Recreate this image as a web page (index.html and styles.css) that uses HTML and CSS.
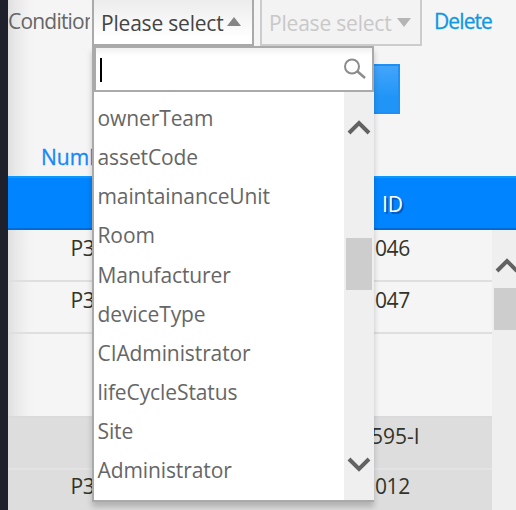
FILE: index.html
```html
<!DOCTYPE html>
<html lang="en">
<head>
<meta charset="utf-8">
<title>Asset conditions</title>
<link rel="stylesheet" href="styles.css">
</head>
<body>
<div class="app">
  <aside class="rail"></aside>
  <main class="main">
    <div class="filters">
      <span class="label">Condition</span>
      <div class="select open"><span>Please select</span><i class="tri up"></i>
        <div class="menu">
          <div class="search"><i class="caret"></i>
            <svg width="24" height="24" viewBox="0 0 24 24" fill="none" stroke="#8c8c8c"><circle cx="9" cy="8.5" r="7" stroke-width="2"/><path d="M14 13l8 7" stroke-width="2.5"/></svg>
          </div>
          <div class="list">
            <ul>
              <li>ownerTeam</li>
              <li>assetCode</li>
              <li>maintainanceUnit</li>
              <li>Room</li>
              <li>Manufacturer</li>
              <li>deviceType</li>
              <li>CIAdministrator</li>
              <li>lifeCycleStatus</li>
              <li>Site</li>
              <li>Administrator</li>
            </ul>
            <div class="scroll">
              <svg width="26" height="20" viewBox="0 0 26 20"><path d="M3 15L13 5l10 10" fill="none" stroke="#626262" stroke-width="4"/></svg>
              <div class="thumb"></div>
              <svg class="down" width="26" height="20" viewBox="0 0 26 20"><path d="M3 4l10 10L23 4" fill="none" stroke="#626262" stroke-width="4"/></svg>
            </div>
          </div>
        </div>
      </div>
      <div class="select disabled"><span>Please select</span><i class="tri dn"></i></div>
      <a class="delete">Delete</a>
    </div>
    <div class="actions"><div class="button"></div></div>
    <div class="sort"><span>Numb</span></div>
    <div class="head"><span>ID</span></div>
    <div class="body">
      <div class="rows">
        <div class="row"><span class="num">P3</span><span class="id">046</span></div>
        <div class="row"><span class="num">P3</span><span class="id">047</span></div>
        <div class="row blank"></div>
        <div class="row grey"><span class="num"></span><span class="id">595-I</span></div>
        <div class="row grey"><span class="num">P3</span><span class="id">012</span></div>
      </div>
      <div class="page-scroll">
        <svg width="24" height="20" viewBox="0 0 24 20"><path d="M5 16L15 6l10 10" fill="none" stroke="#626262" stroke-width="4"/></svg>
        <div class="page-thumb"></div>
      </div>
    </div>
  </main>
</div>
</body>
</html>
```
FILE: styles.css
```css
* { box-sizing: border-box; }
body { margin: 0; overflow: hidden; font: 21px/26px "Open Sans", "Noto Sans", sans-serif; color: #666; }
.app { display: flex; width: 516px; height: 510px; overflow: hidden; }
.rail { width: 8px; background: #1e202c; }
.main { width: 508px; display: flex; flex-direction: column; background: linear-gradient(90deg, #dfdfdf 0, #e9e9e9 8px, #f4f4f4 22px, #f5f5f5 26px); }
.filters { display: flex; height: 46px; white-space: nowrap; }
.label { width: 82px; margin-right: 2px; padding-top: 8px; overflow: hidden; letter-spacing: -.8px; }
.select { position: relative; width: 162px; height: 46px; padding: 10px 0 0 7px; display: flex; border: 2px solid #aaa; border-top: 0; color: #444; letter-spacing: -.2px; }
.select > span { width: 125px; }
.open { background: linear-gradient(#ececec, #fff 85%); }
.disabled { margin-left: 6px; background: #f3f3f3; border-color: #ccc; color: #c8c8c8; }
.tri { margin-top: 7px; width: 0; height: 0; border: 7px solid transparent; }
.up { margin-left: 1px; border-top: 0; border-bottom: 9px solid #858585; }
.dn { margin: 8px 0 0 3px; border-bottom: 0; border-top: 9px solid #b5b5b5; }
.delete { padding: 8px 0 0 12px; color: #1098e0; letter-spacing: -.9px; -webkit-text-stroke: .3px #1098e0; }
.menu { position: absolute; z-index: 2; top: 46px; left: -2px; width: 282px; height: 456px; background: #fff; border: solid #aaa; border-width: 0 0 2px 2px; box-shadow: 0 5px 6px rgba(0,0,0,.2); color: #666; }
.search { height: 46px; display: flex; justify-content: space-between; padding: 10px 5px 0 4px; border: 2px solid #aaa; background: linear-gradient(#f1f1f1, #fff 8px); }
.caret { width: 2px; height: 24px; background: #000; }
.list { display: flex; height: 408px; }
ul { width: 250px; margin: 0; padding: 7px 0 0 3.5px; list-style: none; }
li { height: 39.15px; line-height: 39px; letter-spacing: -.1px; }
.scroll { width: 30px; padding: 26px 2px 0; background: #efefef; display: flex; flex-direction: column; }
.thumb { width: 26px; height: 52px; margin-top: 100px; background: #cdcdcd; }
.down { margin-top: 165px; }
.actions { height: 92px; padding-top: 18px; }
.button { width: 90px; height: 50px; margin-left: 302px; border: 2px solid #1e90f5; background: linear-gradient(#43a5fb, #2095f7 70%); }
.sort { height: 38px; padding: 6px 0 0 33px; color: #1788f8; -webkit-text-stroke: .3px #1788f8; }
.head { height: 54px; padding: 13px 0 0 374px; background: #0084ff; border-top: 2px solid #0b98ff; border-bottom: 2px solid #006bd6; color: #fff; text-shadow: 2px 2px #0058bd; letter-spacing: -.2px; }
.body { display: flex; height: 280px; color: #333329; letter-spacing: -.4px; }
.rows { width: 484px; }
.row { height: 52px; padding-top: 5px; display: flex; border-bottom: 2px solid #dfdfdf; }
.blank { height: 82px; border: 0; }
.grey { height: 54px; padding-top: 5px; background: #ddd; border-top: 2px solid #dadada; border-bottom: 2px solid #e3e3e3; }
.grey + .grey { padding-top: 1px; border-top-color: #ddd; }
.num { width: 300px; padding-left: 62.5px; }
.id { width: 184px; padding-left: 67px; }
.grey:nth-child(4) .id { padding-left: 63px; letter-spacing: 0; }
.page-scroll { width: 24px; background: #efefef; padding-top: 25px; display: flex; flex-direction: column; }
.page-thumb { width: 22px; height: 42px; margin: 13px 0 0 2px; background: #cdcdcd; }
```
